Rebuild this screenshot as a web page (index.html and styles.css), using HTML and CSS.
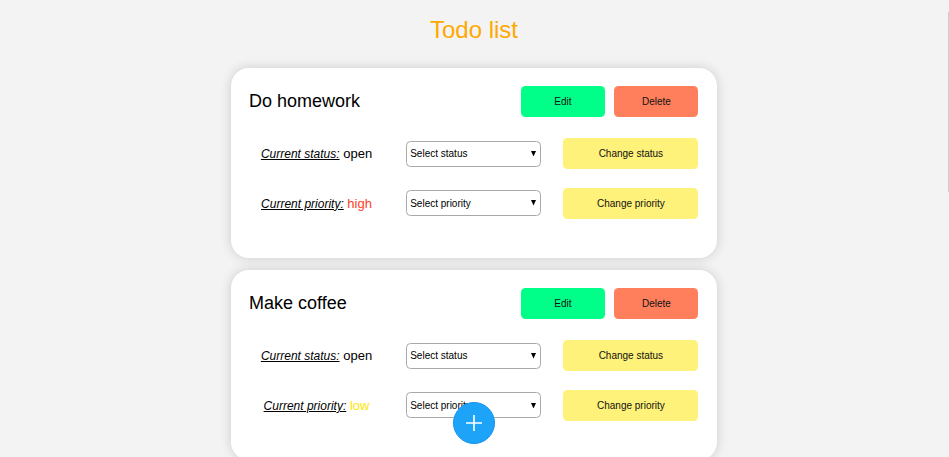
FILE: index.html
```html
<!DOCTYPE html>
<html lang="en">
<head>
<meta charset="utf-8">
<title>Todo list</title>
<link rel="stylesheet" href="styles.css">
</head>
<body>
<h1 class="title">Todo list</h1>
<main class="list">
  <article class="card">
    <header class="card-head">
      <h2 class="name">Do homework</h2>
      <button class="btn edit">Edit</button>
      <button class="btn delete">Delete</button>
    </header>
    <div class="row">
      <p class="current"><span class="label">Current status:</span> open</p>
      <div class="select"><span>Select status</span><svg class="arrow" viewBox="0 0 5 5.5"><path d="M0 0H5L2.5 5.5Z"/></svg></div>
      <button class="btn change">Change status</button>
    </div>
    <div class="row">
      <p class="current high"><span class="label">Current priority:</span> high</p>
      <div class="select"><span>Select priority</span><svg class="arrow" viewBox="0 0 5 5.5"><path d="M0 0H5L2.5 5.5Z"/></svg></div>
      <button class="btn change">Change priority</button>
    </div>
  </article>
  <article class="card">
    <header class="card-head">
      <h2 class="name">Make coffee</h2>
      <button class="btn edit">Edit</button>
      <button class="btn delete">Delete</button>
    </header>
    <div class="row">
      <p class="current"><span class="label">Current status:</span> open</p>
      <div class="select"><span>Select status</span><svg class="arrow" viewBox="0 0 5 5.5"><path d="M0 0H5L2.5 5.5Z"/></svg></div>
      <button class="btn change">Change status</button>
    </div>
    <div class="row">
      <p class="current low"><span class="label">Current priority:</span> low</p>
      <div class="select"><span>Select priority</span><svg class="arrow" viewBox="0 0 5 5.5"><path d="M0 0H5L2.5 5.5Z"/></svg></div>
      <button class="btn change">Change priority</button>
    </div>
  </article>
</main>
<button class="add" aria-label="Add"><svg width="18" height="18" viewBox="0 0 18 18"><path d="M9 1V17M1 9H17"/></svg></button>
<div class="scroll-edge"></div>
</body>
</html>
```

FILE: styles.css
```css
* { box-sizing: border-box; }
html, body { height: 100%; overflow: hidden; }
body {
  margin: 0;
  background: #f3f3f3;
  color: #000;
  font-family: "Liberation Sans", Arial, sans-serif;
}
.title {
  margin: 0;
  padding: 16px 1px 0 0;
  height: 67.8px;
  font-size: 24px;
  line-height: 28px;
  font-weight: 400;
  text-align: center;
  color: #ffa800;
}
.list {
  display: flex;
  flex-direction: column;
  gap: 11.8px;
  width: 486px;
  margin-left: 231px;
}
.card {
  height: 190.4px;
  padding: 18px;
  border-radius: 18px;
  background: #fff;
  box-shadow: 0 0 12px rgba(0, 0, 0, 0.16);
}
.card-head {
  display: flex;
  align-items: center;
  gap: 9.5px;
  height: 31px;
  margin-bottom: 21.3px;
  padding-right: 0.6px;
}
.name {
  flex: 1;
  margin: 0;
  font-size: 18px;
  font-weight: 400;
}
.btn {
  height: 31px;
  padding: 0;
  border: 0;
  border-radius: 4.5px;
  font: 10px "Liberation Sans", Arial, sans-serif;
  color: #111;
}
.edit, .delete { width: 84px; }
.edit { background: #00ff88; }
.delete { background: #ff7f5c; }
.change { background: #fff27a; }
.row {
  display: grid;
  grid-template-columns: repeat(3, 135px);
  column-gap: 22.2px;
  align-items: center;
  height: 31px;
  margin-bottom: 18.5px;
}
.current {
  margin: 0;
  font-size: 13px;
  text-align: center;
  white-space: nowrap;
}
.label {
  font-size: 12px;
  font-style: italic;
  text-decoration: underline;
  color: #000;
}
.high { color: #ff3c1e; }
.low { color: #ffe600; }
.select {
  display: flex;
  align-items: center;
  justify-content: space-between;
  height: 26px;
  padding: 0 4px 0 3px;
  border: 1px solid #a9a9a9;
  border-radius: 4.5px;
  background: #fff;
  font-size: 10px;
}
.arrow { width: 5px; height: 5.5px; }
.add {
  position: fixed;
  left: 453px;
  top: 402px;
  display: flex;
  align-items: center;
  justify-content: center;
  width: 42px;
  height: 42px;
  padding: 0;
  border: 1px solid #1493f0;
  border-radius: 50%;
  background: #1da4f8;
}
.add path { stroke: #fff; stroke-width: 1.6; fill: none; }
.scroll-edge {
  position: fixed;
  right: 0;
  top: 12px;
  width: 1px;
  height: 180px;
  background: #cdcdcd;
}
```
